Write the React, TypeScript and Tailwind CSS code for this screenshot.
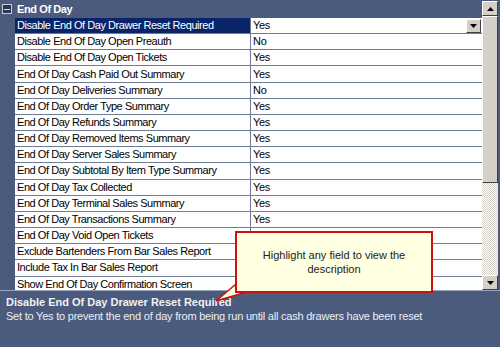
import React from "react";

const rows = [
  { label: "Disable End Of Day Drawer Reset Required", value: "Yes" },
  { label: "Disable End Of Day Open Preauth", value: "No" },
  { label: "Disable End Of Day Open Tickets", value: "Yes" },
  { label: "End Of Day Cash Paid Out Summary", value: "Yes" },
  { label: "End Of Day Deliveries Summary", value: "No" },
  { label: "End Of Day Order Type Summary", value: "Yes" },
  { label: "End Of Day Refunds Summary", value: "Yes" },
  { label: "End Of Day Removed Items Summary", value: "Yes" },
  { label: "End Of Day Server Sales Summary", value: "Yes" },
  { label: "End Of Day Subtotal By Item Type Summary", value: "Yes" },
  { label: "End Of Day Tax Collected", value: "Yes" },
  { label: "End Of Day Terminal Sales Summary", value: "Yes" },
  { label: "End Of Day Transactions Summary", value: "Yes" },
  { label: "End Of Day Void Open Tickets", value: "" },
  { label: "Exclude Bartenders From Bar Sales Report", value: "" },
  { label: "Include Tax In Bar Sales Report", value: "" },
  { label: "Show End Of Day Confirmation Screen", value: "" },
];

const Arrow = ({ up }: { up?: boolean }) => (
  <svg width="7" height="4" viewBox="0 0 7 4">
    <path d={up ? "M3.5 0L7 4H0z" : "M0 0h7L3.5 4z"} fill="#000" />
  </svg>
);

const ScrollBtn = ({ up }: { up?: boolean }) => (
  <div className="h-[15px] w-[16px] bg-[#d4d0c8] border-t border-l border-t-white border-l-white border-r border-b border-r-[#404040] border-b-[#404040] flex items-center justify-center">
    <Arrow up={up} />
  </div>
);

export default function App() {
  return (
    <div
      className="w-[500px] h-[347px] bg-[#4b5b7e] flex flex-col overflow-hidden relative text-[11px]"
      style={{ fontFamily: "Tahoma, 'Liberation Sans', Arial, sans-serif" }}
    >
      {/* grid */}
      <div className="h-[290px] flex">
        {/* gutter */}
        <div className="w-[15px] shrink-0 pt-[4px] pl-[2px]">
          <div className="w-[10px] h-[10px] border border-[#c9cdd6] bg-[#2a3550] flex items-center justify-center">
            <div className="w-[6px] h-[1px] bg-[#e0e4ea]" />
          </div>
        </div>
        <div className="flex-1 flex flex-col overflow-hidden">
          <div className="h-[18px] shrink-0 flex items-center pl-[2px] text-white font-bold tracking-[-0.4px]">
            End Of Day
          </div>
          {rows.map((r, i) => (
            <div
              key={r.label}
              className="h-[16.17px] shrink-0 flex border-b border-[#6f7c95]"
            >
              <div
                className={`w-[235px] shrink-0 pl-[2px] flex items-center leading-none whitespace-nowrap tracking-[-0.45px] ${
                  i === 0 ? "bg-[#0a246a] text-white" : "bg-white text-black"
                }`}
              >
                {r.label}
              </div>
              <div className="flex-1 bg-white border-l border-[#6f7c95] pl-[2px] flex items-center justify-between leading-none text-black tracking-[-0.3px]">
                <span>{r.value}</span>
                {i === 0 && (
                  <div className="h-[14px] w-[15px] mr-[1px] bg-[#d4d0c8] border-t border-l border-t-white border-l-white border-r border-b border-r-[#404040] border-b-[#404040] flex items-center justify-center">
                    <Arrow />
                  </div>
                )}
              </div>
            </div>
          ))}
        </div>
        {/* scrollbar */}
        <div className="w-[16px] shrink-0 flex flex-col bg-[repeating-conic-gradient(#d4d0c8_0_25%,#ffffff_0_50%)] bg-[length:2px_2px] mt-[1px]">
          <ScrollBtn up />
          <div className="h-[167px] bg-[#d4d0c8] border-t border-l border-t-white border-l-white border-r border-b border-r-[#404040] border-b-[#404040]" />
          <div className="flex-1" />
          <ScrollBtn />
        </div>
        <div className="w-[2px] shrink-0" />
      </div>

      {/* description */}
      <div className="flex-1 border-t border-[#9aa4b8] px-[6px] pt-[4px]">
        <div className="font-bold text-[#f2f2f2] leading-[14px]">
          Disable End Of Day Drawer Reset Required
        </div>
        <div className="text-[#eceef2] leading-[14px] tracking-[-0.22px]">
          Set to Yes to prevent the end of day from being run until all cash drawers have been reset
        </div>
      </div>

      {/* tooltip */}
      <svg
        className="absolute left-[210px] top-[280px]"
        width="50"
        height="26"
        viewBox="0 0 50 26"
      >
        <path d="M26 4L6 21L40 11" fill="#ffffe1" stroke="#cc1111" strokeWidth="1.5" />
      </svg>
      <div className="absolute left-[235px] top-[231px] w-[198px] h-[62px] bg-[#ffffe1] border-2 border-[#cc1111] flex items-center justify-center text-center text-[#222] leading-[14px] px-[20px]">
        Highlight any field to view the description
      </div>
    </div>
  );
}
